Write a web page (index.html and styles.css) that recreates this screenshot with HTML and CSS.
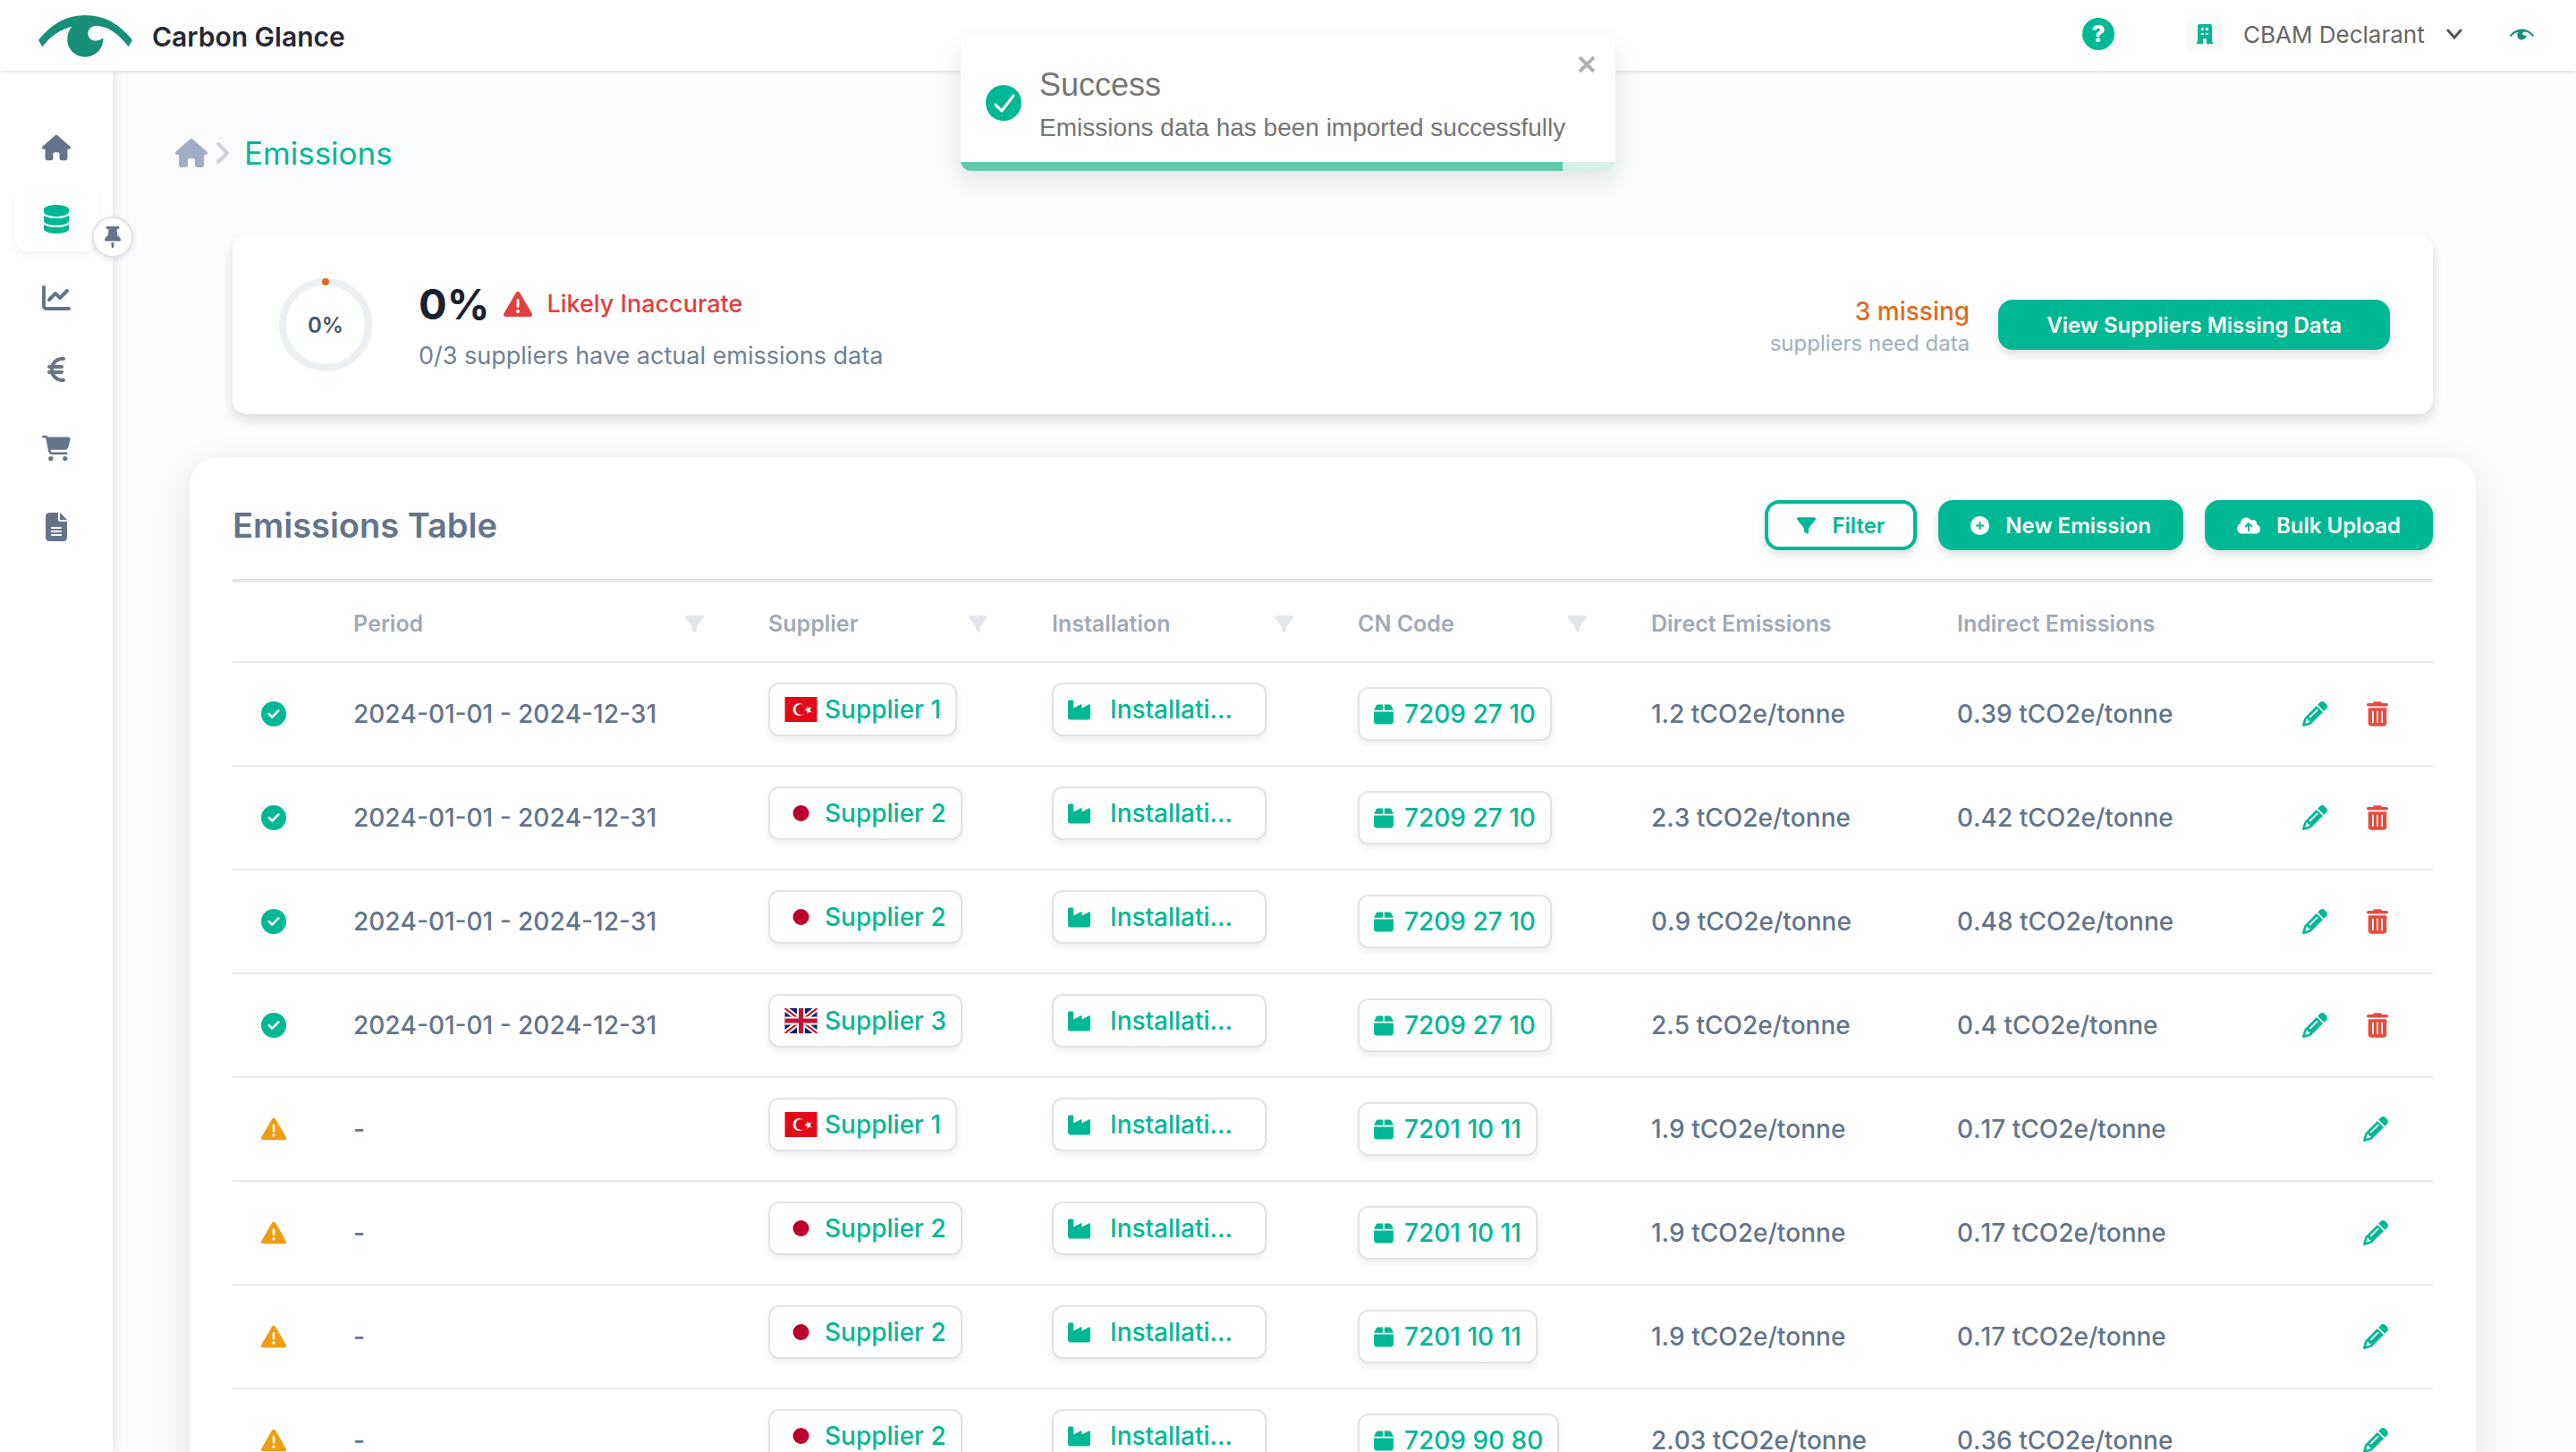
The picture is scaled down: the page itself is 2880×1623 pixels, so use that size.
FILE: index.html
```html
<!DOCTYPE html>
<html lang="en">
<head>
    <meta charset="UTF-8">
    <meta name="viewport" content="width=device-width, initial-scale=1.0">
    <title>Emissions - Carbon Glance</title>
    <link rel="stylesheet" href="styles.css">
</head>
<body>
    <!-- Icon sprite -->
    <svg class="sprite" aria-hidden="true">
        <symbol id="eye" viewBox="0 0 105 47"><path d="M0 27.7C15 9 32 0 52.3 0C73 0 90 9 105 27.7L100.7 35.3C90 21 78 12.5 65 11.7C58 12 54.5 17 55.5 22C57 29 66 31 72.3 25.3C73 38 63 46.7 52.3 46.7C41 46.7 32.3 38 32.3 27C32.3 21 34 16 37.7 12.7C25 15 13 24 4.3 35.3Z"/></symbol>
        <symbol id="home" viewBox="0 0 576 512"><path d="M575.8 255.5c0 18-15 32.1-32 32.1h-32l.7 160.2c0 2.7-.2 5.4-.5 8.1V472c0 22.1-17.9 40-40 40H456c-1.1 0-2.2 0-3.3-.1c-1.4 .1-2.8 .1-4.2 .1H416 392c-22.1 0-40-17.9-40-40V448 384c0-17.7-14.3-32-32-32H256c-17.7 0-32 14.3-32 32v64 24c0 22.1-17.9 40-40 40H160 128.1c-1.5 0-3-.1-4.5-.2c-1.2 .1-2.4 .2-3.6 .2H104c-22.1 0-40-17.9-40-40V360c0-.9 0-1.9 .1-2.8V287.6H32c-18 0-32-14-32-32.1c0-9 3-17 10-24L266.4 8c7-7 15-8 22-8s15 2 21 7L564.8 231.5c8 7 12 15 11 24z"/></symbol>
        <symbol id="database" viewBox="0 0 448 512"><path d="M448 80v48c0 44.2-100.3 80-224 80S0 172.2 0 128V80C0 35.8 100.3 0 224 0S448 35.8 448 80zM393.2 214.7c20.8-7.4 39.9-16.9 54.8-28.6V288c0 44.2-100.3 80-224 80S0 332.2 0 288V186.1c14.9 11.8 34 21.2 54.8 28.6C99.7 230.7 159.5 240 224 240s124.3-9.3 169.2-25.3zM0 346.1c14.9 11.8 34 21.2 54.8 28.6C99.7 390.7 159.5 400 224 400s124.3-9.3 169.2-25.3c20.8-7.4 39.9-16.9 54.8-28.6V432c0 44.2-100.3 80-224 80S0 476.2 0 432V346.1z"/></symbol>
        <symbol id="pin" viewBox="0 0 384 512"><path d="M32 32C32 14.3 46.3 0 64 0H320c17.7 0 32 14.3 32 32s-14.3 32-32 32H290.5l11.4 148.2c36.7 19.9 65.7 53.2 79.5 94.7l1 3c3.3 9.8 1.6 20.5-4.4 28.8s-15.7 13.3-26 13.3H32c-10.3 0-19.9-4.9-26-13.3s-7.7-19.1-4.4-28.8l1-3c13.8-41.5 42.8-74.8 79.5-94.7L93.5 64H64C46.3 64 32 49.7 32 32zM160 384h64v96c0 17.7-14.3 32-32 32s-32-14.3-32-32V384z"/></symbol>
        <symbol id="chart" viewBox="0 0 512 512"><path d="M64 64c0-17.7-14.3-32-32-32S0 46.3 0 64V400c0 44.2 35.8 80 80 80H480c17.7 0 32-14.3 32-32s-14.3-32-32-32H80c-8.8 0-16-7.2-16-16V64zm406.6 86.6c12.5-12.5 12.5-32.8 0-45.3s-32.8-12.5-45.3 0L320 210.7l-57.4-57.4c-12.5-12.5-32.8-12.5-45.3 0l-112 112c-12.5 12.5-12.5 32.8 0 45.3s32.8 12.5 45.3 0L240 221.3l57.4 57.4c12.5 12.5 32.8 12.5 45.3 0l128-128z"/></symbol>
        <symbol id="euro" viewBox="0 0 320 512"><path d="M48.1 240c-.1 2.7-.1 5.3-.1 8v16c0 2.7 0 5.3 .1 8H32c-17.7 0-32 14.3-32 32s14.3 32 32 32H60.3C89.9 419.9 170 480 264 480h24c17.7 0 32-14.3 32-32s-14.3-32-32-32H264c-57.9 0-108.2-32.4-133.9-80H256c17.7 0 32-14.3 32-32s-14.3-32-32-32H112.2c-.1-2.6-.2-5.3-.2-8V248c0-2.7 .1-5.4 .2-8H256c17.7 0 32-14.3 32-32s-14.3-32-32-32H130.1c25.7-47.6 76-80 133.9-80h24c17.7 0 32-14.3 32-32s-14.3-32-32-32H264C170 32 89.9 92.1 60.3 176H32c-17.7 0-32 14.3-32 32s14.3 32 32 32H48.1z"/></symbol>
        <symbol id="cart" viewBox="0 0 576 512"><path d="M0 24C0 10.7 10.7 0 24 0H69.5c22 0 41.5 12.8 50.6 32h411c26.3 0 45.5 25 38.6 50.4l-41 152.3c-8.5 31.4-37 53.3-69.5 53.3H170.7l5.4 28.5c2.2 11.3 12.1 19.5 23.6 19.5H488c13.3 0 24 10.7 24 24s-10.7 24-24 24H199.7c-34.6 0-64.3-24.6-70.7-58.5L77.4 54.5c-.7-3.8-4-6.5-7.9-6.5H24C10.7 48 0 37.3 0 24zM128 464a48 48 0 1 1 96 0 48 48 0 1 1 -96 0zm336-48a48 48 0 1 1 0 96 48 48 0 1 1 0-96z"/></symbol>
        <symbol id="file" viewBox="0 0 384 512"><path fill-rule="evenodd" d="M64 0C28.7 0 0 28.7 0 64V448c0 35.3 28.7 64 64 64H320c35.3 0 64-28.7 64-64V160H256c-17.7 0-32-14.3-32-32V0H64zM256 0V128H384L256 0zM112 256H272c8.8 0 16 7.2 16 16s-7.2 16-16 16H112c-8.8 0-16-7.2-16-16s7.2-16 16-16zm0 64H272c8.8 0 16 7.2 16 16s-7.2 16-16 16H112c-8.8 0-16-7.2-16-16s7.2-16 16-16zm0 64H272c8.8 0 16 7.2 16 16s-7.2 16-16 16H112c-8.8 0-16-7.2-16-16s7.2-16 16-16z"/></symbol>
        <symbol id="check" viewBox="0 0 512 512"><path d="M256 512A256 256 0 1 0 256 0a256 256 0 1 0 0 512zM369 209L241 337c-9.4 9.4-24.6 9.4-33.9 0l-64-64c-9.4-9.4-9.4-24.6 0-33.9s24.6-9.4 33.9 0l47 47L335 175c9.4-9.4 24.6-9.4 33.9 0s9.4 24.6 0 33.9z"/></symbol>
        <symbol id="warning" viewBox="0 0 512 512"><path d="M256 32c14.2 0 27.3 7.5 34.5 19.8l216 368c7.3 12.4 7.3 27.7 .2 40.1S486.3 480 472 480H40c-14.3 0-27.6-7.7-34.7-20.1s-7-27.8 .2-40.1l216-368C228.7 39.5 241.8 32 256 32zm0 128c-13.3 0-24 10.7-24 24V296c0 13.3 10.7 24 24 24s24-10.7 24-24V184c0-13.3-10.7-24-24-24zm32 224a32 32 0 1 0 -64 0 32 32 0 1 0 64 0z"/></symbol>
        <symbol id="filter" viewBox="0 0 512 512"><path d="M3.9 54.9C10.5 40.9 24.5 32 40 32H472c15.5 0 29.5 8.9 36.1 22.9s4.6 30.5-5.2 42.5L320 320.9V448c0 12.1-6.8 23.2-17.7 28.6s-23.8 4.3-33.5-3l-64-48c-8.1-6-12.8-15.5-12.8-25.6V320.9L9 97.3C-.7 85.4-2.8 68.8 3.9 54.9z"/></symbol>
        <symbol id="plus" viewBox="0 0 512 512"><path d="M256 512A256 256 0 1 0 256 0a256 256 0 1 0 0 512zM232 344V280H168c-13.3 0-24-10.7-24-24s10.7-24 24-24h64V168c0-13.3 10.7-24 24-24s24 10.7 24 24v64h64c13.3 0 24 10.7 24 24s-10.7 24-24 24H280v64c0 13.3-10.7 24-24 24s-24-10.7-24-24z"/></symbol>
        <symbol id="upload" viewBox="0 0 640 512"><path d="M144 480C64.5 480 0 415.5 0 336c0-62.8 40.2-116.2 96.2-135.9c-.1-2.7-.2-5.4-.2-8.1c0-88.4 71.6-160 160-160c59.3 0 111 32.2 138.7 80.2C409.9 102 428.3 96 448 96c53 0 96 43 96 96c0 12.2-2.3 23.8-6.4 34.6C596 238.4 640 290.1 640 352c0 70.7-57.3 128-128 128H144zm79-217c-9.4 9.4-9.4 24.6 0 33.9s24.6 9.4 33.9 0l39-39V392c0 13.3 10.7 24 24 24s24-10.7 24-24V257.9l39 39c9.4 9.4 24.6 9.4 33.9 0s9.4-24.6 0-33.9l-80-80c-9.4-9.4-24.6-9.4-33.9 0l-80 80z"/></symbol>
        <symbol id="pencil" viewBox="0 0 512 512"><path d="M410.3 231l11.3-11.3-33.9-33.9-62.1-62.1L291.7 89.8l-11.3 11.3-22.6 22.6L58.6 322.9c-10.4 10.4-18 23.3-22.2 37.4L1 480.7c-2.5 8.4-.2 17.5 6.1 23.7s15.3 8.5 23.7 6.1l120.3-35.4c14.1-4.2 27-11.8 37.4-22.2L387.7 253.7 410.3 231zM160 399.4l-9.1 22.7c-4 3.1-8.5 5.4-13.3 6.9L59.4 452l23-78.1c1.4-4.9 3.8-9.4 6.9-13.3l22.7-9.1v32c0 8.8 7.2 16 16 16h32zM362.7 18.7L348.3 33.2 325.7 55.8 314.3 67.1l33.9 33.9 62.1 62.1 33.9 33.9 11.3-11.3 22.6-22.6 14.5-14.5c25-25 25-65.5 0-90.5L453.3 18.7c-25-25-65.5-25-90.5 0zm-47.4 168l-144 144c-6.2 6.2-16.4 6.2-22.6 0s-6.2-16.4 0-22.6l144-144c6.2-6.2 16.4-6.2 22.6 0s6.2 16.4 0 22.6z"/></symbol>
        <symbol id="trash" viewBox="0 0 448 512"><path d="M135.2 17.7C140.6 6.8 151.7 0 163.8 0H284.2c12.1 0 23.2 6.8 28.6 17.7L320 32h96c17.7 0 32 14.3 32 32s-14.3 32-32 32H32C14.3 96 0 81.7 0 64S14.3 32 32 32h96l7.2-14.3zM32 128H416V448c0 35.3-28.7 64-64 64H96c-35.3 0-64-28.7-64-64V128zm96 64c-8.8 0-16 7.2-16 16V432c0 8.8 7.2 16 16 16s16-7.2 16-16V208c0-8.8-7.2-16-16-16zm96 0c-8.8 0-16 7.2-16 16V432c0 8.8 7.2 16 16 16s16-7.2 16-16V208c0-8.8-7.2-16-16-16zm96 0c-8.8 0-16 7.2-16 16V432c0 8.8 7.2 16 16 16s16-7.2 16-16V208c0-8.8-7.2-16-16-16z"/></symbol>
        <symbol id="industry" viewBox="0 0 512 512"><path d="M32 32C14.3 32 0 46.3 0 64V304v48 80c0 26.5 21.5 48 48 48H464c26.5 0 48-21.5 48-48V304 152.2c0-18.2-19.4-29.7-35.4-21.1L320 215.4V152.2c0-18.2-19.4-29.7-35.4-21.1L128 215.4V64c0-17.7-14.3-32-32-32H32z"/></symbol>
        <symbol id="box" viewBox="0 0 448 512"><path d="M50.7 58.5L0 160H208V32H93.7C75.5 32 58.9 42.3 50.7 58.5zM240 160H448L397.3 58.5C389.1 42.3 372.5 32 354.3 32H240V160zm208 32H0V416c0 35.3 28.7 64 64 64H384c35.3 0 64-28.7 64-64V192z"/></symbol>
        <symbol id="building" viewBox="0 0 18 22"><path fill-rule="evenodd" d="M3 0H15Q17 0 17 2V20H18V22H11V18Q11 16 9 16T7 18V22H0V20H1V2Q1 0 3 0ZM5 4V7H8V4ZM10 4V7H13V4ZM5 10V12H8V10ZM10 10V12H13V10Z"/></symbol>
        <symbol id="turkey" viewBox="0 0 36 28"><path fill="#e30a17" d="M0 0h36v28H0z"/><circle cx="16" cy="14" r="7" fill="#fff"/><circle cx="18" cy="14" r="6" fill="#e30a17"/><path fill="#fff" d="M22 14l3-1v-3l2 2.500 3-1-2 3 2 3-3-1-2 2.500v-3z"/></symbol>
        <symbol id="japan" viewBox="0 0 36 28"><path fill="#fff" d="M0 0h36v28H0z"/><circle cx="18" cy="14" r="9" fill="#bc002d"/></symbol>
        <symbol id="uk" viewBox="0 0 36 28"><path fill="#012169" d="M0 0h36v28H0z"/><path d="M0 0l36 28M36 0L0 28" stroke="#fff" stroke-width="6"/><path d="M0 0l36 28M36 0L0 28" stroke="#c8102e" stroke-width="2"/><path d="M18 0v28M0 14h36" stroke="#fff" stroke-width="9"/><path d="M18 0v28M0 14h36" stroke="#c8102e" stroke-width="5"/></symbol>
    </svg>

    <header class="topbar">
        <a class="brand" href="#">
            <svg class="brand-logo"><use href="#eye"/></svg>
            <span>Carbon Glance</span>
        </a>
        <button class="help" aria-label="Help">?</button>
        <label class="account">
            <span class="account-icon"><svg><use href="#building"/></svg></span>
            <select aria-label="Account">
                <option>CBAM Declarant</option>
            </select>
            <svg class="chevron-down" viewBox="0 0 18 12"><path d="M2 2l7 8 7-8"/></svg>
        </label>
        <a class="profile" href="#" aria-label="Profile"><svg><use href="#eye"/></svg></a>
    </header>

    <div class="layout">
        <nav class="sidebar">
            <div class="nav-group">
                <a class="nav-item" href="#" aria-label="Home"><svg><use href="#home"/></svg></a>
                <a class="nav-item active" href="#" aria-label="Emissions"><svg><use href="#database"/></svg></a>
            </div>
            <div class="nav-group">
                <a class="nav-item" href="#" aria-label="Analytics"><svg><use href="#chart"/></svg></a>
                <a class="nav-item" href="#" aria-label="Costs"><svg><use href="#euro"/></svg></a>
            </div>
            <a class="nav-item" href="#" aria-label="Purchases"><svg><use href="#cart"/></svg></a>
            <a class="nav-item" href="#" aria-label="Reports"><svg><use href="#file"/></svg></a>
            <button class="pin" aria-label="Pin sidebar"><svg><use href="#pin"/></svg></button>
        </nav>

        <main class="content">
            <nav class="breadcrumb" aria-label="Breadcrumb">
                <a href="#" aria-label="Home"><svg class="crumb-home"><use href="#home"/></svg></a>
                <svg class="crumb-sep" viewBox="0 0 14 24"><path d="M2 2l10 10L2 22"/></svg>
                <a class="crumb-current" href="#">Emissions</a>
            </nav>

            <section class="summary">
                <div class="ring">
                    <svg viewBox="0 0 104 104">
                        <circle cx="52" cy="52" r="48" fill="none" stroke="#edf0f2" stroke-width="8"/>
                        <circle cx="52" cy="4" r="4" fill="#dd6b20"/>
                    </svg>
                    <span class="ring-value">0%</span>
                </div>
                <div class="accuracy">
                    <div class="accuracy-line">
                        <strong>0%</strong>
                        <svg><use href="#warning"/></svg>
                        <span>Likely Inaccurate</span>
                    </div>
                    <p>0/3 suppliers have actual emissions data</p>
                </div>
                <div class="missing">
                    <span class="missing-count">3 missing</span>
                    <span class="missing-note">suppliers need data</span>
                </div>
                <button class="btn btn-wide">View Suppliers Missing Data</button>
            </section>

            <section class="panel">
                <div class="panel-header">
                    <h2>Emissions Table</h2>
                    <button class="btn btn-outline"><svg><use href="#filter"/></svg>Filter</button>
                    <button class="btn"><svg><use href="#plus"/></svg>New Emission</button>
                    <button class="btn"><svg class="icon-upload"><use href="#upload"/></svg>Bulk Upload</button>
                </div>

                <table class="emissions">
                    <colgroup>
                        <col class="col-status">
                        <col class="col-period">
                        <col class="col-supplier">
                        <col class="col-installation">
                        <col class="col-code">
                        <col class="col-direct">
                        <col class="col-indirect">
                        <col>
                    </colgroup>
                    <thead>
                        <tr>
                            <th></th>
                            <th><div class="th">Period <button aria-label="Filter period"><svg><use href="#filter"/></svg></button></div></th>
                            <th><div class="th">Supplier <button aria-label="Filter supplier"><svg><use href="#filter"/></svg></button></div></th>
                            <th><div class="th">Installation <button aria-label="Filter installation"><svg><use href="#filter"/></svg></button></div></th>
                            <th><div class="th">CN Code <button aria-label="Filter CN code"><svg><use href="#filter"/></svg></button></div></th>
                            <th>Direct Emissions</th>
                            <th>Indirect Emissions</th>
                            <th></th>
                        </tr>
                    </thead>
                    <tbody>
                        <!-- Complete rows -->
                        <tr>
                            <td class="status ok"><svg><use href="#check"/></svg></td>
                            <td>2024-01-01 - 2024-12-31</td>
                            <td class="raised"><a class="chip" href="#"><svg class="flag"><use href="#turkey"/></svg>Supplier 1</a></td>
                            <td class="raised"><a class="chip chip-installation" href="#"><svg><use href="#industry"/></svg>Installati...</a></td>
                            <td><a class="chip chip-code" href="#"><svg><use href="#box"/></svg>7209 27 10</a></td>
                            <td>1.2 tCO2e/tonne</td>
                            <td>0.39 tCO2e/tonne</td>
                            <td><div class="actions"><button class="edit" aria-label="Edit"><svg><use href="#pencil"/></svg></button><button class="delete" aria-label="Delete"><svg><use href="#trash"/></svg></button></div></td>
                        </tr>
                        <tr>
                            <td class="status ok"><svg><use href="#check"/></svg></td>
                            <td>2024-01-01 - 2024-12-31</td>
                            <td class="raised"><a class="chip" href="#"><svg class="flag"><use href="#japan"/></svg>Supplier 2</a></td>
                            <td class="raised"><a class="chip chip-installation" href="#"><svg><use href="#industry"/></svg>Installati...</a></td>
                            <td><a class="chip chip-code" href="#"><svg><use href="#box"/></svg>7209 27 10</a></td>
                            <td>2.3 tCO2e/tonne</td>
                            <td>0.42 tCO2e/tonne</td>
                            <td><div class="actions"><button class="edit" aria-label="Edit"><svg><use href="#pencil"/></svg></button><button class="delete" aria-label="Delete"><svg><use href="#trash"/></svg></button></div></td>
                        </tr>
                        <tr>
                            <td class="status ok"><svg><use href="#check"/></svg></td>
                            <td>2024-01-01 - 2024-12-31</td>
                            <td class="raised"><a class="chip" href="#"><svg class="flag"><use href="#japan"/></svg>Supplier 2</a></td>
                            <td class="raised"><a class="chip chip-installation" href="#"><svg><use href="#industry"/></svg>Installati...</a></td>
                            <td><a class="chip chip-code" href="#"><svg><use href="#box"/></svg>7209 27 10</a></td>
                            <td>0.9 tCO2e/tonne</td>
                            <td>0.48 tCO2e/tonne</td>
                            <td><div class="actions"><button class="edit" aria-label="Edit"><svg><use href="#pencil"/></svg></button><button class="delete" aria-label="Delete"><svg><use href="#trash"/></svg></button></div></td>
                        </tr>
                        <tr>
                            <td class="status ok"><svg><use href="#check"/></svg></td>
                            <td>2024-01-01 - 2024-12-31</td>
                            <td class="raised"><a class="chip" href="#"><svg class="flag"><use href="#uk"/></svg>Supplier 3</a></td>
                            <td class="raised"><a class="chip chip-installation" href="#"><svg><use href="#industry"/></svg>Installati...</a></td>
                            <td><a class="chip chip-code" href="#"><svg><use href="#box"/></svg>7209 27 10</a></td>
                            <td>2.5 tCO2e/tonne</td>
                            <td>0.4 tCO2e/tonne</td>
                            <td><div class="actions"><button class="edit" aria-label="Edit"><svg><use href="#pencil"/></svg></button><button class="delete" aria-label="Delete"><svg><use href="#trash"/></svg></button></div></td>
                        </tr>

                        <!-- Rows without a period -->
                        <tr>
                            <td class="status warn"><svg><use href="#warning"/></svg></td>
                            <td>-</td>
                            <td class="raised"><a class="chip" href="#"><svg class="flag"><use href="#turkey"/></svg>Supplier 1</a></td>
                            <td class="raised"><a class="chip chip-installation" href="#"><svg><use href="#industry"/></svg>Installati...</a></td>
                            <td><a class="chip chip-code" href="#"><svg><use href="#box"/></svg>7201 10 11</a></td>
                            <td>1.9 tCO2e/tonne</td>
                            <td>0.17 tCO2e/tonne</td>
                            <td><div class="actions"><button class="edit" aria-label="Edit"><svg><use href="#pencil"/></svg></button></div></td>
                        </tr>
                        <tr>
                            <td class="status warn"><svg><use href="#warning"/></svg></td>
                            <td>-</td>
                            <td class="raised"><a class="chip" href="#"><svg class="flag"><use href="#japan"/></svg>Supplier 2</a></td>
                            <td class="raised"><a class="chip chip-installation" href="#"><svg><use href="#industry"/></svg>Installati...</a></td>
                            <td><a class="chip chip-code" href="#"><svg><use href="#box"/></svg>7201 10 11</a></td>
                            <td>1.9 tCO2e/tonne</td>
                            <td>0.17 tCO2e/tonne</td>
                            <td><div class="actions"><button class="edit" aria-label="Edit"><svg><use href="#pencil"/></svg></button></div></td>
                        </tr>
                        <tr>
                            <td class="status warn"><svg><use href="#warning"/></svg></td>
                            <td>-</td>
                            <td class="raised"><a class="chip" href="#"><svg class="flag"><use href="#japan"/></svg>Supplier 2</a></td>
                            <td class="raised"><a class="chip chip-installation" href="#"><svg><use href="#industry"/></svg>Installati...</a></td>
                            <td><a class="chip chip-code" href="#"><svg><use href="#box"/></svg>7201 10 11</a></td>
                            <td>1.9 tCO2e/tonne</td>
                            <td>0.17 tCO2e/tonne</td>
                            <td><div class="actions"><button class="edit" aria-label="Edit"><svg><use href="#pencil"/></svg></button></div></td>
                        </tr>
                        <tr>
                            <td class="status warn"><svg><use href="#warning"/></svg></td>
                            <td>-</td>
                            <td class="raised"><a class="chip" href="#"><svg class="flag"><use href="#japan"/></svg>Supplier 2</a></td>
                            <td class="raised"><a class="chip chip-installation" href="#"><svg><use href="#industry"/></svg>Installati...</a></td>
                            <td><a class="chip chip-code" href="#"><svg><use href="#box"/></svg>7209 90 80</a></td>
                            <td>2.03 tCO2e/tonne</td>
                            <td>0.36 tCO2e/tonne</td>
                            <td><div class="actions"><button class="edit" aria-label="Edit"><svg><use href="#pencil"/></svg></button></div></td>
                        </tr>
                    </tbody>
                </table>
            </section>
        </main>
    </div>

    <div class="toast" role="alert">
        <div class="toast-body">
            <svg class="toast-icon" viewBox="0 0 40 40"><circle cx="20" cy="20" r="20"/><path d="M11 22l7 7 13-17"/></svg>
            <div class="toast-text">
                <div class="toast-title">Success</div>
                <div class="toast-message">Emissions data has been imported successfully</div>
            </div>
            <button class="toast-close" aria-label="Close"><svg viewBox="0 0 20 20"><path d="M2 2l16 16M18 2L2 18"/></svg></button>
        </div>
        <div class="toast-progress"><div class="toast-bar"></div></div>
    </div>
</body>
</html>
```

FILE: styles.css
```css
* {
    box-sizing: border-box;
}

body {
    margin: 0;
    height: 100vh;
    display: flex;
    flex-direction: column;
    overflow: hidden;
    font-family: Inter, 'Liberation Sans', sans-serif;
    font-size: 28px;
    color: #64748b;
    background: #fafbfd;
}

a {
    color: inherit;
    text-decoration: none;
}

button {
    padding: 0;
    border: none;
    background: none;
    font-family: inherit;
    color: inherit;
    cursor: pointer;
}

svg {
    display: block;
    flex: none;
    fill: currentColor;
}

.sprite {
    position: absolute;
    width: 0;
    height: 0;
}

/* Top bar */
.topbar {
    position: relative;
    z-index: 2;
    flex: none;
    display: flex;
    align-items: center;
    height: 79px;
    padding: 0 47px 3px 43px;
    background: white;
    box-shadow: 0 1px 4px rgba(0, 0, 0, 0.14);
}

.brand {
    display: flex;
    align-items: center;
    gap: 22px;
    margin-right: auto;
    padding-top: 5px;
    font-size: 30px;
    font-weight: 600;
    color: #262833;
}

.brand-logo {
    width: 105px;
    height: 47px;
    color: #178f79;
}

.help {
    width: 36px;
    height: 36px;
    margin-right: 80px;
    border-radius: 50%;
    background: #00b894;
    color: white;
    font-size: 26px;
    font-weight: 800;
    line-height: 36px;
}

.account {
    display: flex;
    align-items: center;
    margin-right: 53px;
    color: #666;
}

.account-icon {
    display: flex;
    align-items: center;
    justify-content: center;
    width: 42px;
    height: 42px;
    margin-right: 22px;
    border-radius: 8px;
    background: #fafafa;
    color: #00b894;
}

.account-icon svg {
    width: 18px;
    height: 22px;
}

.account select {
    appearance: none;
    margin-right: 24px;
    padding: 0;
    border: none;
    background: none;
    font-family: inherit;
    font-size: 26px;
    color: inherit;
}

.chevron-down {
    width: 18px;
    height: 12px;
    fill: none;
    stroke: #555;
    stroke-width: 3;
    stroke-linecap: round;
}

.profile svg {
    width: 27px;
    height: 13px;
    color: #178f79;
}

/* Sidebar */
.layout {
    flex: 1;
    display: flex;
    min-height: 0;
}

.sidebar {
    position: relative;
    z-index: 1;
    flex: none;
    display: flex;
    flex-direction: column;
    gap: 16px;
    width: 126px;
    padding: 50px 16px;
    background: white;
    box-shadow: 1px 0 12px rgba(0, 0, 0, 0.1);
}

.nav-group {
    display: flex;
    flex-direction: column;
    gap: 8px;
}

.nav-item {
    display: flex;
    align-items: center;
    justify-content: center;
    height: 72px;
    border-radius: 16px;
}

.nav-item svg {
    width: 32px;
    height: 32px;
}

.nav-item.active {
    color: #00b894;
    box-shadow: 0 4px 8px rgba(0, 0, 0, 0.05);
}

.pin {
    position: absolute;
    top: 163px;
    right: -23px;
    display: flex;
    align-items: center;
    justify-content: center;
    width: 46px;
    height: 46px;
    border: 2px solid #e2e4e8;
    border-radius: 50%;
    background: white;
    box-shadow: 0 2px 6px rgba(0, 0, 0, 0.1);
}

.pin svg {
    width: 18px;
    height: 24px;
}

/* Content */
.content {
    flex: 1;
    min-width: 0;
    padding: 70px 112px 0 86px;
    overflow: hidden;
}

.breadcrumb {
    display: flex;
    align-items: center;
    height: 44px;
    margin: 0 0 70px -16px;
    font-size: 35px;
}

.crumb-home {
    width: 36px;
    height: 32px;
    color: #a0aec5;
}

.crumb-sep {
    width: 14px;
    height: 24px;
    margin: 0 17px 0 10px;
    fill: none;
    stroke: #ced2d8;
    stroke-width: 4;
    stroke-linecap: round;
    stroke-linejoin: round;
}

.crumb-current {
    color: #00b894;
}

/* Accuracy summary */
.summary {
    display: flex;
    align-items: center;
    height: 200px;
    margin: 0 48px 48px;
    padding: 0 48px 0 52px;
    border-radius: 16px;
    background: white;
    box-shadow: 0 6px 12px rgba(0, 0, 0, 0.13);
}

.ring {
    display: grid;
    place-items: center;
    margin-right: 52px;
}

.ring svg {
    grid-area: 1 / 1;
    width: 104px;
    height: 104px;
}

.ring-value {
    grid-area: 1 / 1;
    font-size: 24px;
    font-weight: 600;
    color: #4a5568;
}

.accuracy {
    padding-top: 6px;
}

.accuracy-line {
    display: flex;
    align-items: center;
    gap: 16px;
    color: #e53e3e;
    font-weight: 500;
    font-size: 27px;
    line-height: 56px;
}

.accuracy-line strong {
    font-size: 47px;
    font-weight: 700;
    color: #1a202c;
}

.accuracy-line svg {
    width: 32px;
    height: 32px;
}

.accuracy p {
    margin: 8px 0 0;
    font-size: 27px;
    line-height: 44px;
    color: #718096;
}

.missing {
    display: flex;
    flex-direction: column;
    align-items: flex-end;
    margin: 0 32px 0 auto;
    padding-top: 5px;
    line-height: 36px;
}

.missing-count {
    font-weight: 500;
    color: #dd6b20;
}

.missing-note {
    font-size: 24px;
    color: #a0aec0;
}

.btn {
    display: flex;
    align-items: center;
    gap: 18px;
    height: 56px;
    padding: 0 36px;
    border-radius: 16px;
    background: #00b894;
    color: white;
    font-size: 24px;
    font-weight: 600;
    box-shadow: 0 5px 10px rgba(0, 0, 0, 0.12);
}

.btn svg {
    width: 21px;
    height: 21px;
}

.btn .icon-upload {
    width: 26px;
}

.btn-wide {
    padding: 0 54px;
}

.btn-outline {
    padding: 0 32px;
    border: 4px solid #00b894;
    background: white;
    color: #00b894;
}

/* Emissions table */
.panel {
    padding: 48px;
    border-radius: 32px;
    background: white;
    box-shadow: 0 16px 48px rgba(0, 0, 0, 0.09);
}

.panel-header {
    display: flex;
    align-items: center;
    gap: 24px;
    padding-bottom: 32px;
    border-bottom: 4px solid #e8e8e8;
}

.panel-header h2 {
    margin: 0 auto 0 0;
    font-size: 38px;
    font-weight: 600;
    line-height: 56px;
}

.emissions {
    width: 100%;
    border-collapse: separate;
    border-spacing: 0;
    table-layout: fixed;
    font-weight: 500;
    font-kerning: none;
}

.col-status {
    width: 99px;
}

.col-period {
    width: 464px;
}

.col-supplier {
    width: 317px;
}

.col-installation,
.col-direct {
    width: 342px;
}

.col-code {
    width: 328px;
}

.col-indirect {
    width: 320px;
}

.emissions th {
    height: 90px;
    padding: 4px 0 0 36px;
    border-bottom: 2px solid #e8e8e8;
    font-size: 25px;
    font-weight: 600;
    text-align: left;
    color: #a0aab8;
}

.th {
    display: flex;
    align-items: center;
    justify-content: space-between;
    padding-right: 36px;
}

.th svg {
    width: 21px;
    height: 21px;
    color: #e2e5ea;
}

.emissions td {
    height: 116px;
    padding: 0 0 0 36px;
    border-bottom: 2px solid #e8e8e8;
    white-space: nowrap;
}

.emissions td.status {
    padding-left: 32px;
}

.status svg {
    width: 28px;
    height: 28px;
}

.ok {
    color: #00b894;
}

.warn {
    color: #f39c12;
}

.emissions td.raised {
    padding-bottom: 10px;
}

.chip {
    display: flex;
    align-items: center;
    gap: 8px;
    width: fit-content;
    height: 60px;
    padding: 0 16px;
    border: 2px solid #e0e3e6;
    border-radius: 12px;
    color: #00b894;
    box-shadow: 0 4px 8px rgba(0, 0, 0, 0.07);
}

.flag {
    width: 37px;
    height: 28px;
}

.chip-installation {
    gap: 22px;
    width: 240px;
}

.chip-installation svg {
    width: 25px;
    height: 25px;
}

.chip-code {
    gap: 12px;
}

.chip-code svg {
    width: 22px;
    height: 25px;
}

.actions {
    display: flex;
    justify-content: flex-end;
    gap: 44px;
    padding-right: 50px;
}

.actions svg {
    width: 28px;
    height: 28px;
}

.edit {
    color: #00b894;
}

.delete {
    color: #e74c3c;
}

.actions .delete svg {
    width: 24px;
}

/* Toast */
.toast {
    position: absolute;
    z-index: 3;
    top: 39px;
    left: 0;
    right: 0;
    width: 732px;
    margin: 0 auto;
    border-radius: 12px;
    overflow: hidden;
    background: white;
    box-shadow: 0 10px 28px rgba(0, 0, 0, 0.1);
    font-family: 'Liberation Sans', Arial, sans-serif;
    color: #757575;
}

.toast-body {
    display: flex;
    align-items: center;
    height: 142px;
    padding: 10px 22px 0 28px;
}

.toast-icon {
    width: 40px;
    height: 40px;
    margin-right: 20px;
    fill: #00b894;
}

.toast-icon path {
    fill: none;
    stroke: white;
    stroke-width: 3;
    stroke-linecap: round;
    stroke-linejoin: round;
}

.toast-text {
    flex: 1;
    padding-top: 4px;
}

.toast-title {
    font-size: 36px;
    line-height: 52px;
}

.toast-message {
    line-height: 44px;
    white-space: nowrap;
}

.toast-close {
    align-self: flex-start;
    margin-top: 13px;
}

.toast-close svg {
    width: 20px;
    height: 20px;
    stroke: #b0b0b0;
    stroke-width: 4;
}

.toast-progress {
    height: 10px;
    background: #d6f1e9;
}

.toast-bar {
    width: 92%;
    height: 100%;
    background: #62c9ab;
}
```
